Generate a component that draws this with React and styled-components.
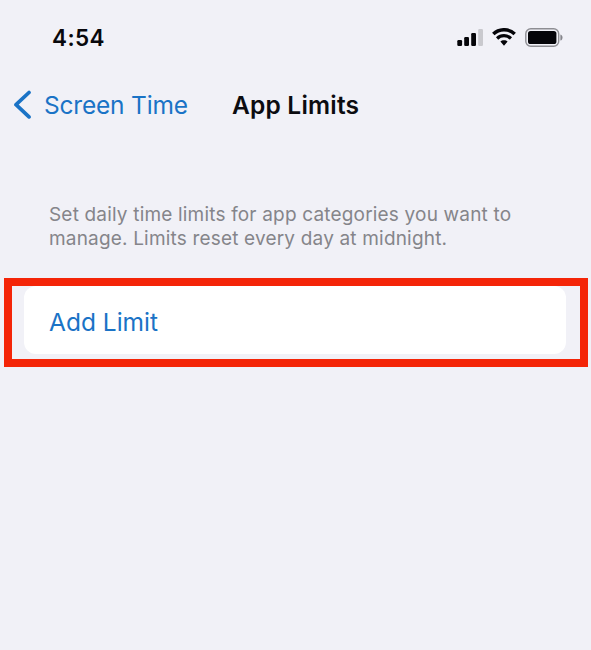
import React from "react";
import styled, { createGlobalStyle } from "styled-components";

const GlobalStyle = createGlobalStyle`
  * { box-sizing: border-box; }
  body { margin: 0; background: #f1f1f7; }
`;

const Screen = styled.main`
  height: 650px;
  overflow: hidden;
  background: #f1f1f7;
  font-family: Inter, "Liberation Sans", sans-serif;
  font-feature-settings: "calt" 0;
`;

const StatusBar = styled.header`
  display: flex;
  justify-content: space-between;
  align-items: center;
  height: 76px;
  padding: 0 28px 0 52px;
`;

const Clock = styled.time`
  font-size: 22.5px;
  font-weight: 600;
  line-height: 28px;
  letter-spacing: 0.4px;
  color: #08080c;
`;

const StatusIcons = styled.div`
  display: flex;
  align-items: center;
  gap: 9px;
  padding-bottom: 2px;

  svg { display: block; }
`;

const NavBar = styled.nav`
  display: flex;
  align-items: center;
  height: 58px;
  padding-left: 13px;
`;

const BackButton = styled.button`
  display: flex;
  align-items: center;
  gap: 12px;
  width: 219px;
  padding: 0;
  border: 0;
  background: none;
  color: #1a73c6;
  font: inherit;
  font-size: 24.5px;
  line-height: 30px;
  white-space: nowrap;
`;

const Title = styled.h1`
  margin: 0;
  font-size: 24.5px;
  font-weight: 600;
  line-height: 30px;
  letter-spacing: 0.2px;
  color: #0c0c10;
  white-space: nowrap;
`;

const Description = styled.p`
  margin: 69px 0 0 49px;
  font-size: 19px;
  line-height: 24px;
  letter-spacing: 0.18px;
  color: #85858a;
  white-space: nowrap;
`;

const Highlight = styled.section`
  width: 584px;
  height: 89px;
  margin: 27px 0 0 4px;
  padding: 0 13px 4px 12px;
  border: 8px solid #f42508;
`;

const LimitRow = styled.button`
  display: flex;
  align-items: center;
  width: 542px;
  height: 68px;
  padding: 3px 0 0 25px;
  border: 0;
  border-radius: 12px;
  background: #fff;
  color: #1a73c6;
  font: inherit;
  font-size: 24.5px;
  line-height: 30px;
`;

const Label = styled.span`
  letter-spacing: ${({ $tracking }) => $tracking || "0"};
`;

const Signal = () => (
  <svg width="26" height="18" viewBox="0 0 26 18" fill="#050509">
    <rect x="0.3" y="12" width="4.8" height="6" rx="1.2" />
    <rect x="7.2" y="9" width="4.8" height="9" rx="1.2" />
    <rect x="14.2" y="5" width="4.8" height="13" rx="1.2" />
    <rect x="21.2" y="1" width="4.8" height="17" rx="1.2" fill="#c9c9ce" />
  </svg>
);

const Wifi = () => (
  <svg width="24" height="18" viewBox="0 0 24 18" fill="none" stroke="#050509">
    <path d="M1.3 6.1a15.3 15.3 0 0 1 21.4 0" strokeWidth="3.5" />
    <path d="M5.1 10.5a9.8 9.8 0 0 1 13.8 0" strokeWidth="3.2" />
    <path d="M12 12.3c-1.5 0-2.7.5-3.6 1.3L12 17.8l3.6-4.2c-.9-.8-2.1-1.3-3.6-1.3Z" fill="#050509" stroke="none" />
  </svg>
);

const Battery = () => (
  <svg width="38" height="19" viewBox="0 0 38 19">
    <rect x="0.8" y="0.8" width="32.9" height="17.4" rx="5" fill="none" stroke="#8e8e93" strokeWidth="1.4" />
    <rect x="3" y="3" width="28.4" height="13" rx="2.6" fill="#050509" />
    <path d="M35.4 6.4c1.5.4 2.1 1.7 2.1 3.1s-.6 2.7-2.1 3.1Z" fill="#85858b" />
  </svg>
);

const BackIcon = () => (
  <svg width="19" height="30" viewBox="0 0 19 30" fill="none" stroke="#1a73c6" strokeWidth="3.7" strokeLinecap="round" strokeLinejoin="round">
    <path d="M16 2.5 3 14.7 16 26.9" />
  </svg>
);

export default function App() {
  return (
    <Screen>
      <GlobalStyle />
      <StatusBar>
        <Clock>4:54</Clock>
        <StatusIcons>
          <Signal />
          <Wifi />
          <Battery />
        </StatusIcons>
      </StatusBar>
      <NavBar>
        <BackButton>
          <BackIcon />
          <Label $tracking="-0.2px">Screen Time</Label>
        </BackButton>
        <Title>App Limits</Title>
      </NavBar>
      <Description>
        Set daily time limits for app categories you want to
        <br />
        manage. Limits reset every day at midnight.
      </Description>
      <Highlight>
        <LimitRow>
          <Label>Add Limit</Label>
        </LimitRow>
      </Highlight>
    </Screen>
  );
}
